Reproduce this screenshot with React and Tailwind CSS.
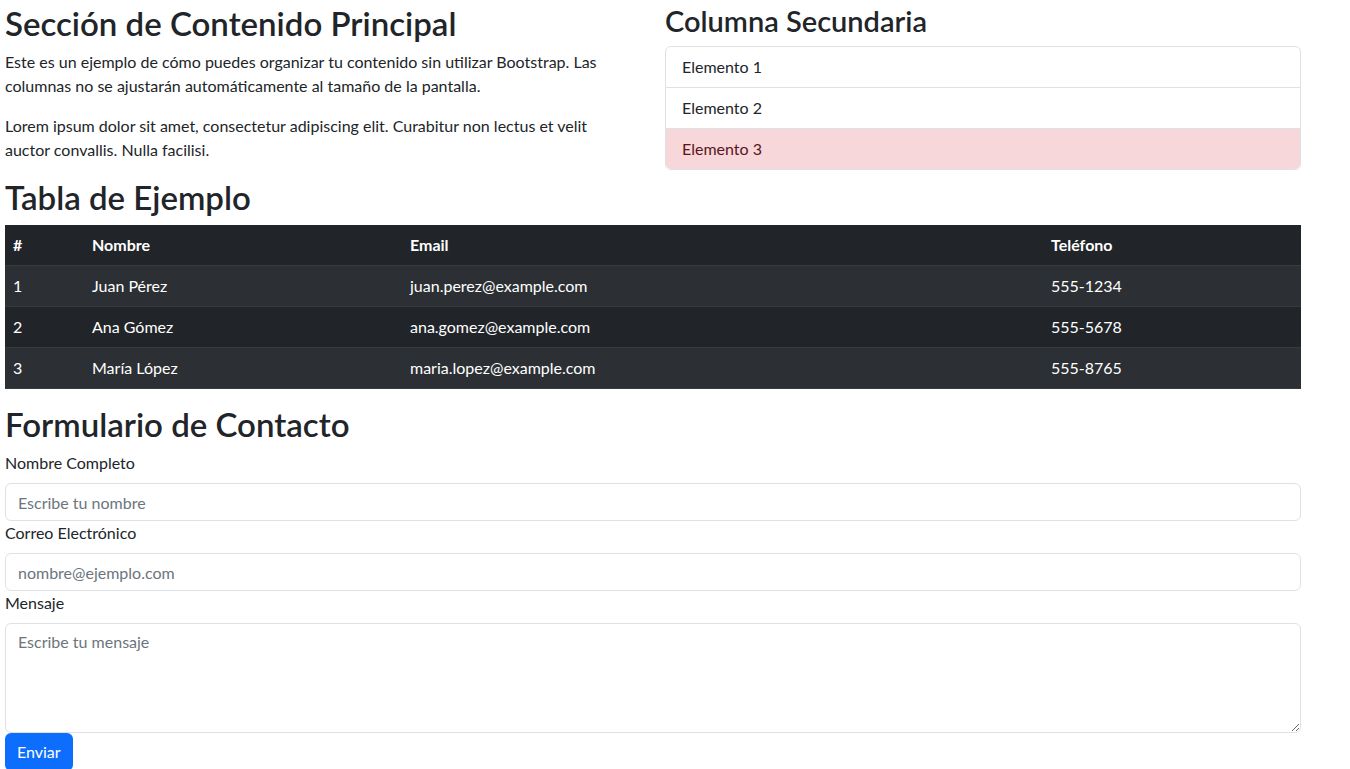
import React from 'react';

const rows = [
  { id: 1, nombre: 'Juan Pérez', email: 'juan.perez@example.com', tel: '555-1234' },
  { id: 2, nombre: 'Ana Gómez', email: 'ana.gomez@example.com', tel: '555-5678' },
  { id: 3, nombre: 'María López', email: 'maria.lopez@example.com', tel: '555-8765' },
];

export default function App() {
  return (
    <div className="min-h-screen bg-white px-[5px] font-['Lato','Noto_Sans',sans-serif] text-base leading-6 text-[#212529]">
      <div className="w-[1296px]">
        {/* Columnas */}
        <div className="flex gap-5">
          <div className="w-[640px] pt-[4px]">
            <h2 className="mb-2 text-[33px] font-semibold leading-[38.4px]">Sección de Contenido Principal</h2>
            <p className="mb-4 max-w-[610px]">
              Este es un ejemplo de cómo puedes organizar tu contenido sin utilizar Bootstrap. Las columnas no se ajustarán automáticamente al tamaño de la pantalla.
            </p>
            <p className="mb-4 max-w-[610px]">
              Lorem ipsum dolor sit amet, consectetur adipiscing elit. Curabitur non lectus et velit auctor convallis. Nulla facilisi.
            </p>
          </div>
          <div className="flex-1 pt-[4px]">
            <h3 className="mb-2 text-[29px] font-semibold leading-[33.6px]">Columna Secundaria</h3>
            <ul className="overflow-hidden rounded-md border border-[#dee2e6]">
              <li className="border-b border-[#dee2e6] px-4 py-2">Elemento 1</li>
              <li className="border-b border-[#dee2e6] px-4 py-2">Elemento 2</li>
              <li className="bg-[#f8d7da] px-4 py-2 text-[#58151c]">Elemento 3</li>
            </ul>
          </div>
        </div>

        {/* Tabla */}
        <h2 className="mb-2 text-[33px] font-semibold leading-[38.4px]">Tabla de Ejemplo</h2>
        <table className="mb-4 w-full border-collapse text-left text-white">
          <thead>
            <tr className="border-b border-[#373b3e] bg-[#212529]">
              <th className="w-[79px] p-2 font-bold">#</th>
              <th className="w-[318px] p-2 font-bold">Nombre</th>
              <th className="w-[641px] p-2 font-bold">Email</th>
              <th className="p-2 font-bold">Teléfono</th>
            </tr>
          </thead>
          <tbody>
            {rows.map((r, i) => (
              <tr
                key={r.id}
                className={
                  i % 2 === 0
                    ? 'border-b border-[#373b3e] bg-[#2c3034]'
                    : 'border-b border-[#373b3e] bg-[#212529]'
                }
              >
                <td className="p-2">{r.id}</td>
                <td className="p-2">{r.nombre}</td>
                <td className="p-2">{r.email}</td>
                <td className="p-2">{r.tel}</td>
              </tr>
            ))}
          </tbody>
        </table>

        {/* Formulario */}
        <h2 className="mb-2 text-[33px] font-semibold leading-[38.4px]">Formulario de Contacto</h2>
        <form className="flex flex-col">
          <label className="mb-2">Nombre Completo</label>
          <input
            type="text"
            placeholder="Escribe tu nombre"
            className="h-[38px] w-full rounded-md border border-[#dee2e6] px-3 py-1.5 placeholder:text-[#6c757d]"
          />
          <label className="mb-2">Correo Electrónico</label>
          <input
            type="email"
            placeholder="nombre@ejemplo.com"
            className="h-[38px] w-full rounded-md border border-[#dee2e6] px-3 py-1.5 placeholder:text-[#6c757d]"
          />
          <label className="mb-2">Mensaje</label>
          <textarea
            rows={4}
            placeholder="Escribe tu mensaje"
            className="h-[110px] w-full rounded-md border border-[#dee2e6] px-3 py-1.5 placeholder:text-[#6c757d]"
          />
          <div>
            <button type="button" className="h-[38px] rounded-md bg-[#0d6efd] px-3 text-white">
              Enviar
            </button>
          </div>
        </form>
      </div>
    </div>
  );
}
